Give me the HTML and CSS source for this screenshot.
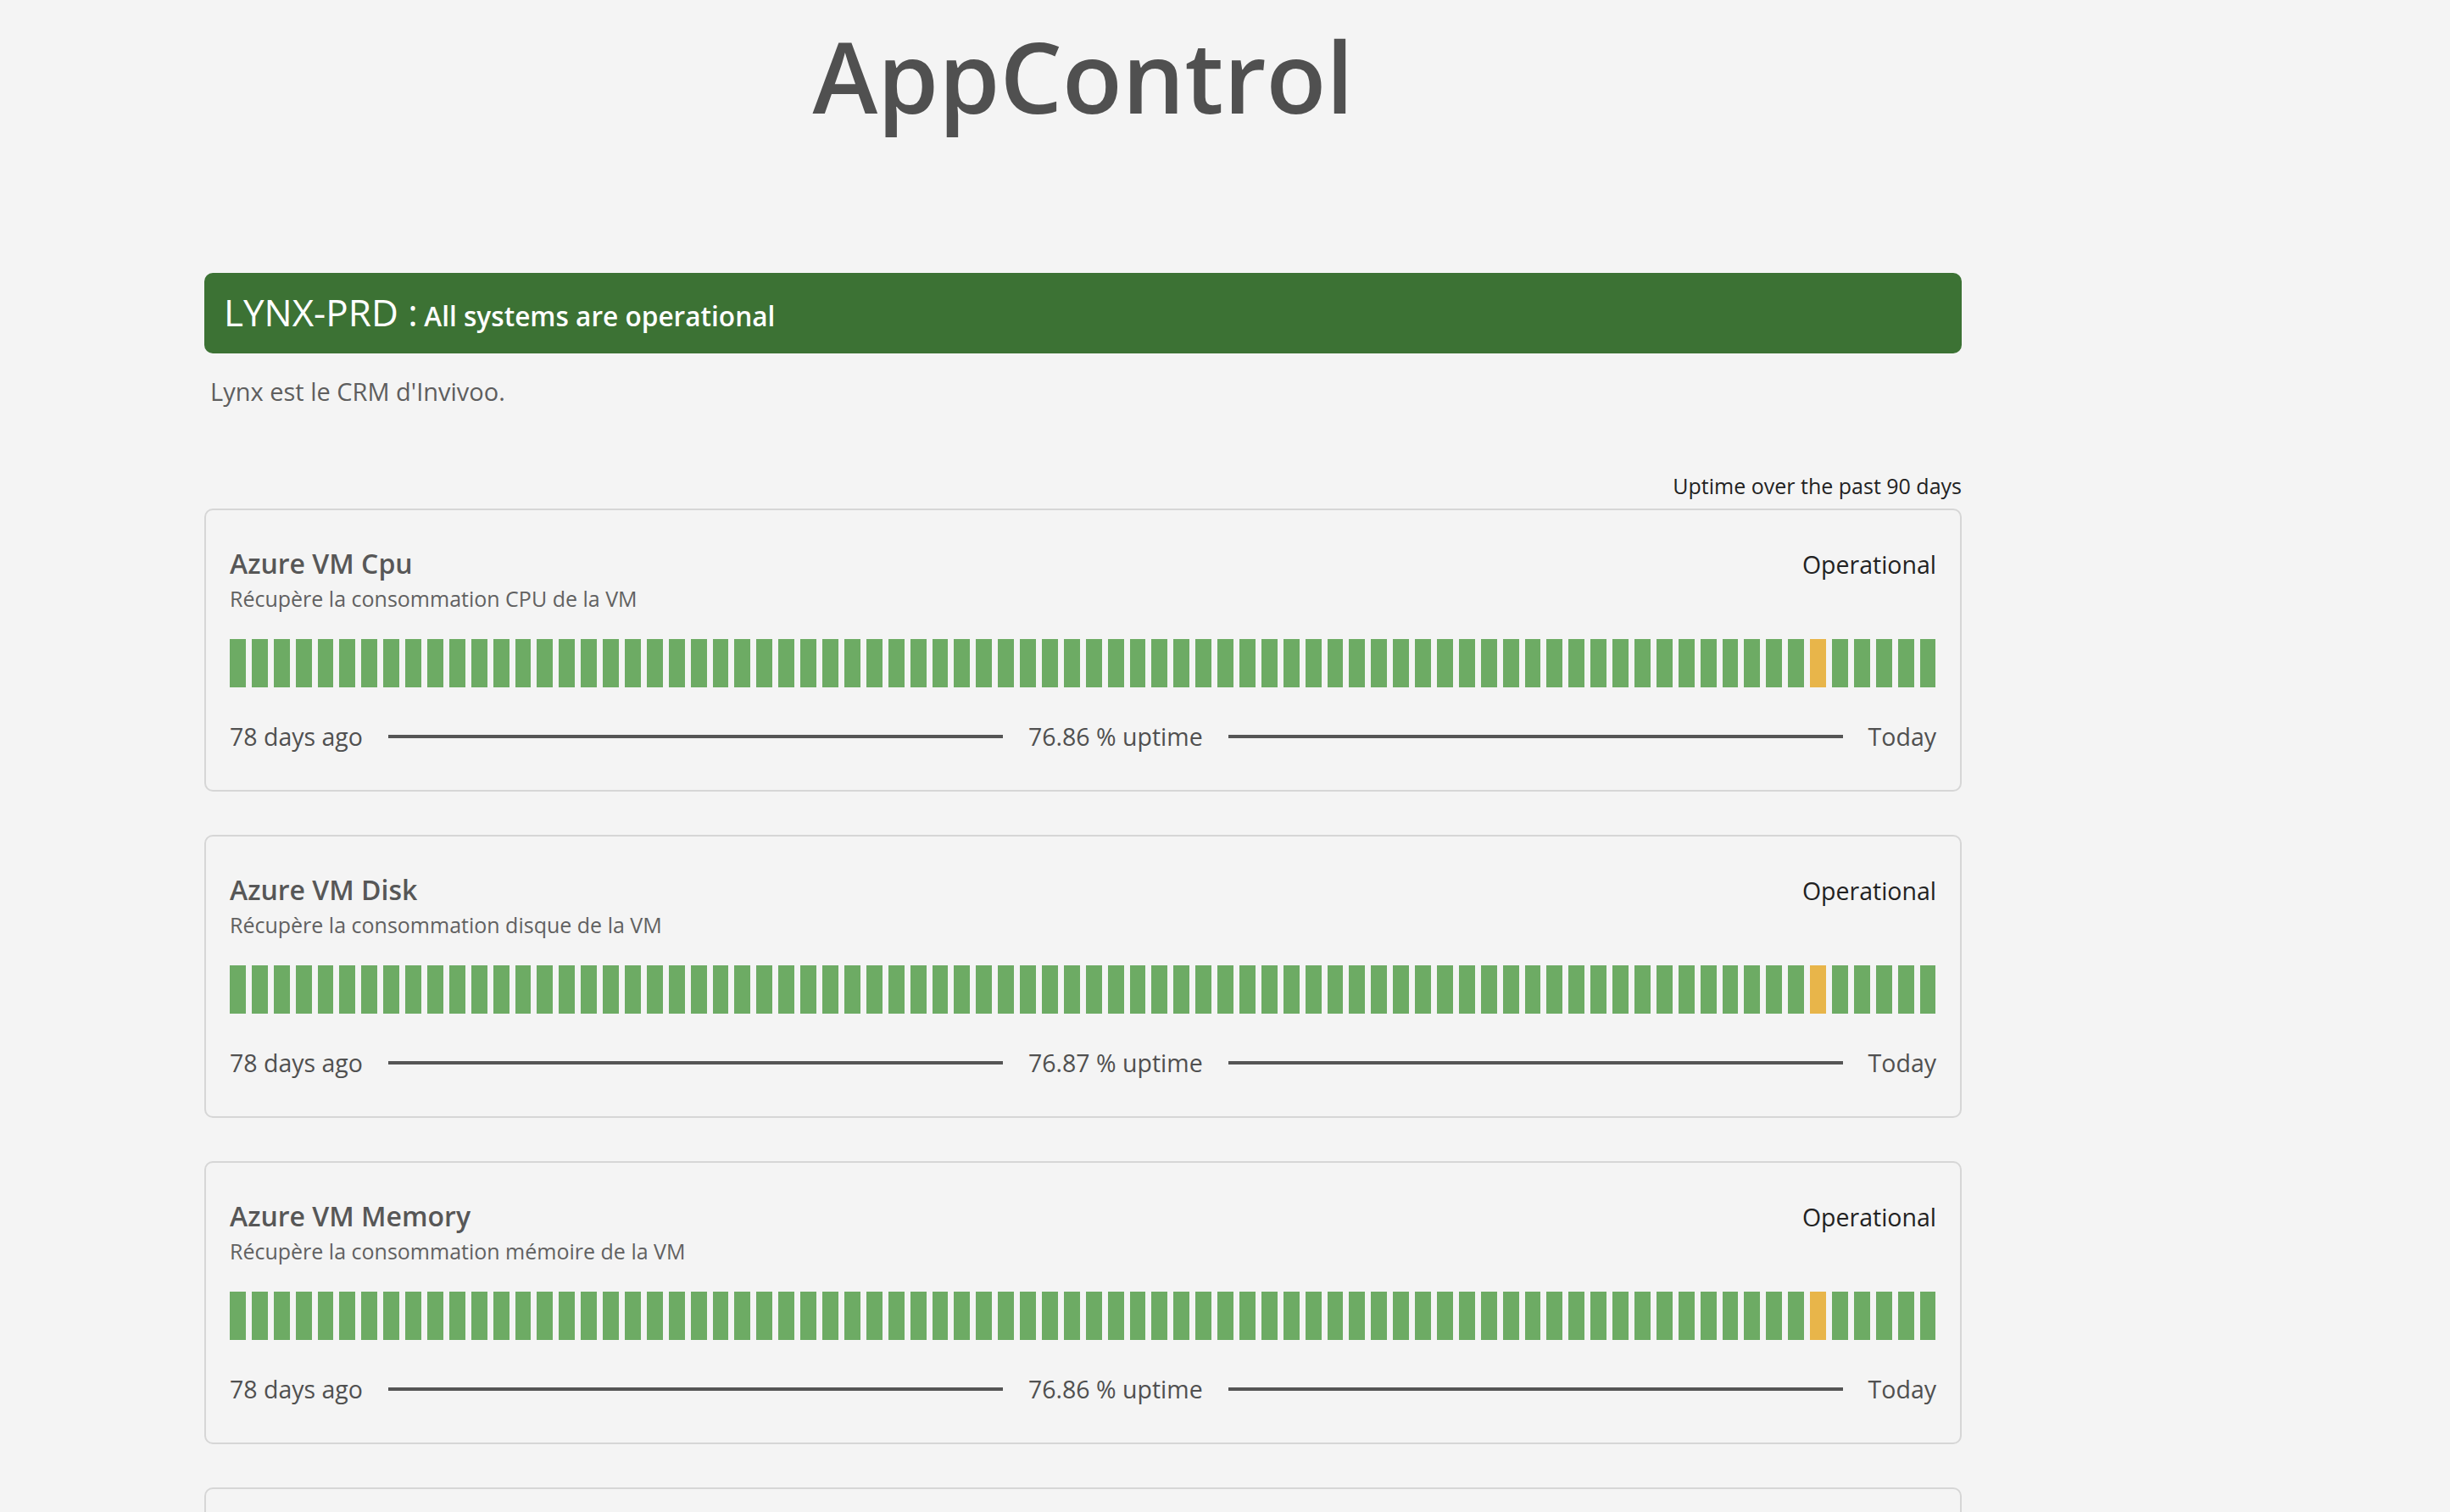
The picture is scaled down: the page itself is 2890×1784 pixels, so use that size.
FILE: index.html
```html
<!DOCTYPE html>
<html lang="fr">
<head>
<meta charset="utf-8">
<title>AppControl</title>
<link rel="stylesheet" href="styles.css">
</head>
<body>
<div class="page">
  <h1 class="brand">AppControl</h1>

  <div class="banner"><span class="banner-name">LYNX-PRD :</span> <span class="banner-status">All systems are operational</span></div>
  <p class="desc">Lynx est le CRM d'Invivoo.</p>

  <div class="range-note">Uptime over the past 90 days</div>

  <div class="card">
    <div class="card-head">
      <div class="card-info">
        <div class="card-title">Azure VM Cpu</div>
        <div class="card-sub">Récupère la consommation CPU de la VM</div>
      </div>
      <div class="card-state">Operational</div>
    </div>
    <div class="bars">
      <span class="day"></span><span class="day"></span><span class="day"></span><span class="day"></span><span class="day"></span><span class="day"></span><span class="day"></span><span class="day"></span><span class="day"></span><span class="day"></span><span class="day"></span><span class="day"></span><span class="day"></span>
      <span class="day"></span><span class="day"></span><span class="day"></span><span class="day"></span><span class="day"></span><span class="day"></span><span class="day"></span><span class="day"></span><span class="day"></span><span class="day"></span><span class="day"></span><span class="day"></span><span class="day"></span>
      <span class="day"></span><span class="day"></span><span class="day"></span><span class="day"></span><span class="day"></span><span class="day"></span><span class="day"></span><span class="day"></span><span class="day"></span><span class="day"></span><span class="day"></span><span class="day"></span><span class="day"></span>
      <span class="day"></span><span class="day"></span><span class="day"></span><span class="day"></span><span class="day"></span><span class="day"></span><span class="day"></span><span class="day"></span><span class="day"></span><span class="day"></span><span class="day"></span><span class="day"></span><span class="day"></span>
      <span class="day"></span><span class="day"></span><span class="day"></span><span class="day"></span><span class="day"></span><span class="day"></span><span class="day"></span><span class="day"></span><span class="day"></span><span class="day"></span><span class="day"></span><span class="day"></span><span class="day"></span>
      <span class="day"></span><span class="day"></span><span class="day"></span><span class="day"></span><span class="day"></span><span class="day"></span><span class="day"></span><span class="day warn"></span><span class="day"></span><span class="day"></span><span class="day"></span><span class="day"></span><span class="day"></span>
    </div>
    <div class="card-foot">
      <span class="foot-text">78 days ago</span>
      <span class="rule"></span>
      <span class="foot-text">76.86 % uptime</span>
      <span class="rule"></span>
      <span class="foot-text">Today</span>
    </div>
  </div>

  <div class="card">
    <div class="card-head">
      <div class="card-info">
        <div class="card-title">Azure VM Disk</div>
        <div class="card-sub">Récupère la consommation disque de la VM</div>
      </div>
      <div class="card-state">Operational</div>
    </div>
    <div class="bars">
      <span class="day"></span><span class="day"></span><span class="day"></span><span class="day"></span><span class="day"></span><span class="day"></span><span class="day"></span><span class="day"></span><span class="day"></span><span class="day"></span><span class="day"></span><span class="day"></span><span class="day"></span>
      <span class="day"></span><span class="day"></span><span class="day"></span><span class="day"></span><span class="day"></span><span class="day"></span><span class="day"></span><span class="day"></span><span class="day"></span><span class="day"></span><span class="day"></span><span class="day"></span><span class="day"></span>
      <span class="day"></span><span class="day"></span><span class="day"></span><span class="day"></span><span class="day"></span><span class="day"></span><span class="day"></span><span class="day"></span><span class="day"></span><span class="day"></span><span class="day"></span><span class="day"></span><span class="day"></span>
      <span class="day"></span><span class="day"></span><span class="day"></span><span class="day"></span><span class="day"></span><span class="day"></span><span class="day"></span><span class="day"></span><span class="day"></span><span class="day"></span><span class="day"></span><span class="day"></span><span class="day"></span>
      <span class="day"></span><span class="day"></span><span class="day"></span><span class="day"></span><span class="day"></span><span class="day"></span><span class="day"></span><span class="day"></span><span class="day"></span><span class="day"></span><span class="day"></span><span class="day"></span><span class="day"></span>
      <span class="day"></span><span class="day"></span><span class="day"></span><span class="day"></span><span class="day"></span><span class="day"></span><span class="day"></span><span class="day warn"></span><span class="day"></span><span class="day"></span><span class="day"></span><span class="day"></span><span class="day"></span>
    </div>
    <div class="card-foot">
      <span class="foot-text">78 days ago</span>
      <span class="rule"></span>
      <span class="foot-text">76.87 % uptime</span>
      <span class="rule"></span>
      <span class="foot-text">Today</span>
    </div>
  </div>

  <div class="card">
    <div class="card-head">
      <div class="card-info">
        <div class="card-title">Azure VM Memory</div>
        <div class="card-sub">Récupère la consommation mémoire de la VM</div>
      </div>
      <div class="card-state">Operational</div>
    </div>
    <div class="bars">
      <span class="day"></span><span class="day"></span><span class="day"></span><span class="day"></span><span class="day"></span><span class="day"></span><span class="day"></span><span class="day"></span><span class="day"></span><span class="day"></span><span class="day"></span><span class="day"></span><span class="day"></span>
      <span class="day"></span><span class="day"></span><span class="day"></span><span class="day"></span><span class="day"></span><span class="day"></span><span class="day"></span><span class="day"></span><span class="day"></span><span class="day"></span><span class="day"></span><span class="day"></span><span class="day"></span>
      <span class="day"></span><span class="day"></span><span class="day"></span><span class="day"></span><span class="day"></span><span class="day"></span><span class="day"></span><span class="day"></span><span class="day"></span><span class="day"></span><span class="day"></span><span class="day"></span><span class="day"></span>
      <span class="day"></span><span class="day"></span><span class="day"></span><span class="day"></span><span class="day"></span><span class="day"></span><span class="day"></span><span class="day"></span><span class="day"></span><span class="day"></span><span class="day"></span><span class="day"></span><span class="day"></span>
      <span class="day"></span><span class="day"></span><span class="day"></span><span class="day"></span><span class="day"></span><span class="day"></span><span class="day"></span><span class="day"></span><span class="day"></span><span class="day"></span><span class="day"></span><span class="day"></span><span class="day"></span>
      <span class="day"></span><span class="day"></span><span class="day"></span><span class="day"></span><span class="day"></span><span class="day"></span><span class="day"></span><span class="day warn"></span><span class="day"></span><span class="day"></span><span class="day"></span><span class="day"></span><span class="day"></span>
    </div>
    <div class="card-foot">
      <span class="foot-text">78 days ago</span>
      <span class="rule"></span>
      <span class="foot-text">76.86 % uptime</span>
      <span class="rule"></span>
      <span class="foot-text">Today</span>
    </div>
  </div>

  <div class="card card-next"></div>
</div>
</body>
</html>
```

FILE: styles.css
```css
* { box-sizing: border-box; }

html, body {
  margin: 0;
  padding: 0;
  background: #f4f4f4;
  font-family: "Open Sans", "DejaVu Sans", sans-serif;
  overflow: hidden;
}

.page {
  width: 2073px;
  margin-left: 241px;
  padding-top: 19px;
}

.brand {
  margin: 0;
  text-align: center;
  font-size: 116px;
  line-height: 140px;
  font-weight: 600;
  color: #505050;
}

.banner {
  margin-top: 163px;
  height: 95px;
  padding: 0 23px;
  background: #3c7234;
  border-radius: 10px;
  color: #ffffff;
  font-size: 44px;
  line-height: 92px;
  white-space: nowrap;
}

.banner-name {
  font-size: 44px;
  font-weight: 500;
}

.banner-status {
  font-size: 31.6px;
  font-weight: 600;
  margin-left: -4px;
}

.desc {
  margin: 0;
  padding-left: 7px;
  margin-top: 25px;
  font-size: 29px;
  line-height: 40px;
  color: #5e5e5e;
}

.range-note {
  margin-top: 74px;
  text-align: right;
  font-size: 25px;
  line-height: 34px;
  color: #222222;
}

.card {
  margin-top: 0;
  margin-bottom: 51px;
  border: 2px solid #d6d6d6;
  border-radius: 10px;
  padding: 41px 28px 43px 28px;
}

.card-next {
  height: 334px;
}

.range-note + .card { margin-top: 10px; }

.card-head {
  display: flex;
  justify-content: space-between;
  align-items: baseline;
}

.card-title {
  font-size: 32px;
  line-height: 44px;
  font-weight: 600;
  color: #575757;
}

.card-sub {
  font-size: 25px;
  line-height: 38px;
  color: #616161;
}

.card-state {
  font-size: 28.5px;
  color: #222222;
}

.bars {
  margin-top: 29px;
  display: flex;
  gap: 7px;
  height: 57px;
}

.day {
  flex: 1 1 0;
  background: #6dab64;
}

.day.warn {
  background: #e8b54a;
}

.card-foot {
  margin-top: 38px;
  display: flex;
  align-items: center;
  gap: 30px;
  height: 40px;
}

.foot-text {
  font-size: 28.5px;
  line-height: 40px;
  color: #505050;
  white-space: nowrap;
}

.rule {
  flex: 1 1 0;
  height: 4px;
  background: #555555;
}
```
